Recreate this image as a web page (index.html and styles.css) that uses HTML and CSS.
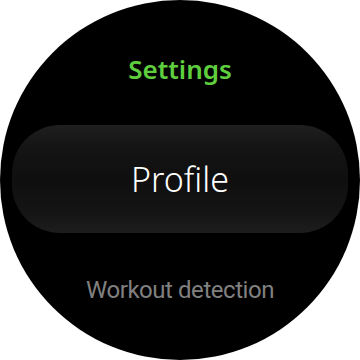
FILE: index.html
```html
<!DOCTYPE html>
<html>
<head>
<meta charset="utf-8">
<link rel="stylesheet" href="styles.css">
</head>
<body>
<div class="watch">
  <div class="title">Settings</div>
  <div class="item selected"><span>Profile</span></div>
  <div class="item next"><span>Workout detection</span></div>
</div>
</body>
</html>
```
FILE: styles.css
```css
html, body {
  margin: 0;
  padding: 0;
  background: #ffffff;
}
.watch {
  width: 360px;
  height: 360px;
  border-radius: 50%;
  background: #000;
  overflow: hidden;
  display: flex;
  flex-direction: column;
  align-items: center;
  font-family: "Noto Sans", "Open Sans", sans-serif;
}
.title {
  margin-top: 51px;
  height: 36px;
  line-height: 36px;
  font-size: 26px;
  font-weight: 600;
  color: #5fce3e;
}
.item {
  display: flex;
  align-items: center;
  justify-content: center;
}
.selected {
  margin-top: 38px;
  width: 336px;
  height: 108px;
  border-radius: 48px;
  background: linear-gradient(to bottom, #1f1f1f 0%, #141414 20%, #0f0f0f 50%, #141414 80%, #1d1d1d 100%);
  color: #fff;
  font-size: 34px;
  font-weight: 300;
}
.next {
  margin-top: 43px;
  color: #808080;
  font-family: "Roboto", "Noto Sans", sans-serif;
  font-size: 24px;
  font-weight: 400;
  letter-spacing: -0.45px;
}
```
